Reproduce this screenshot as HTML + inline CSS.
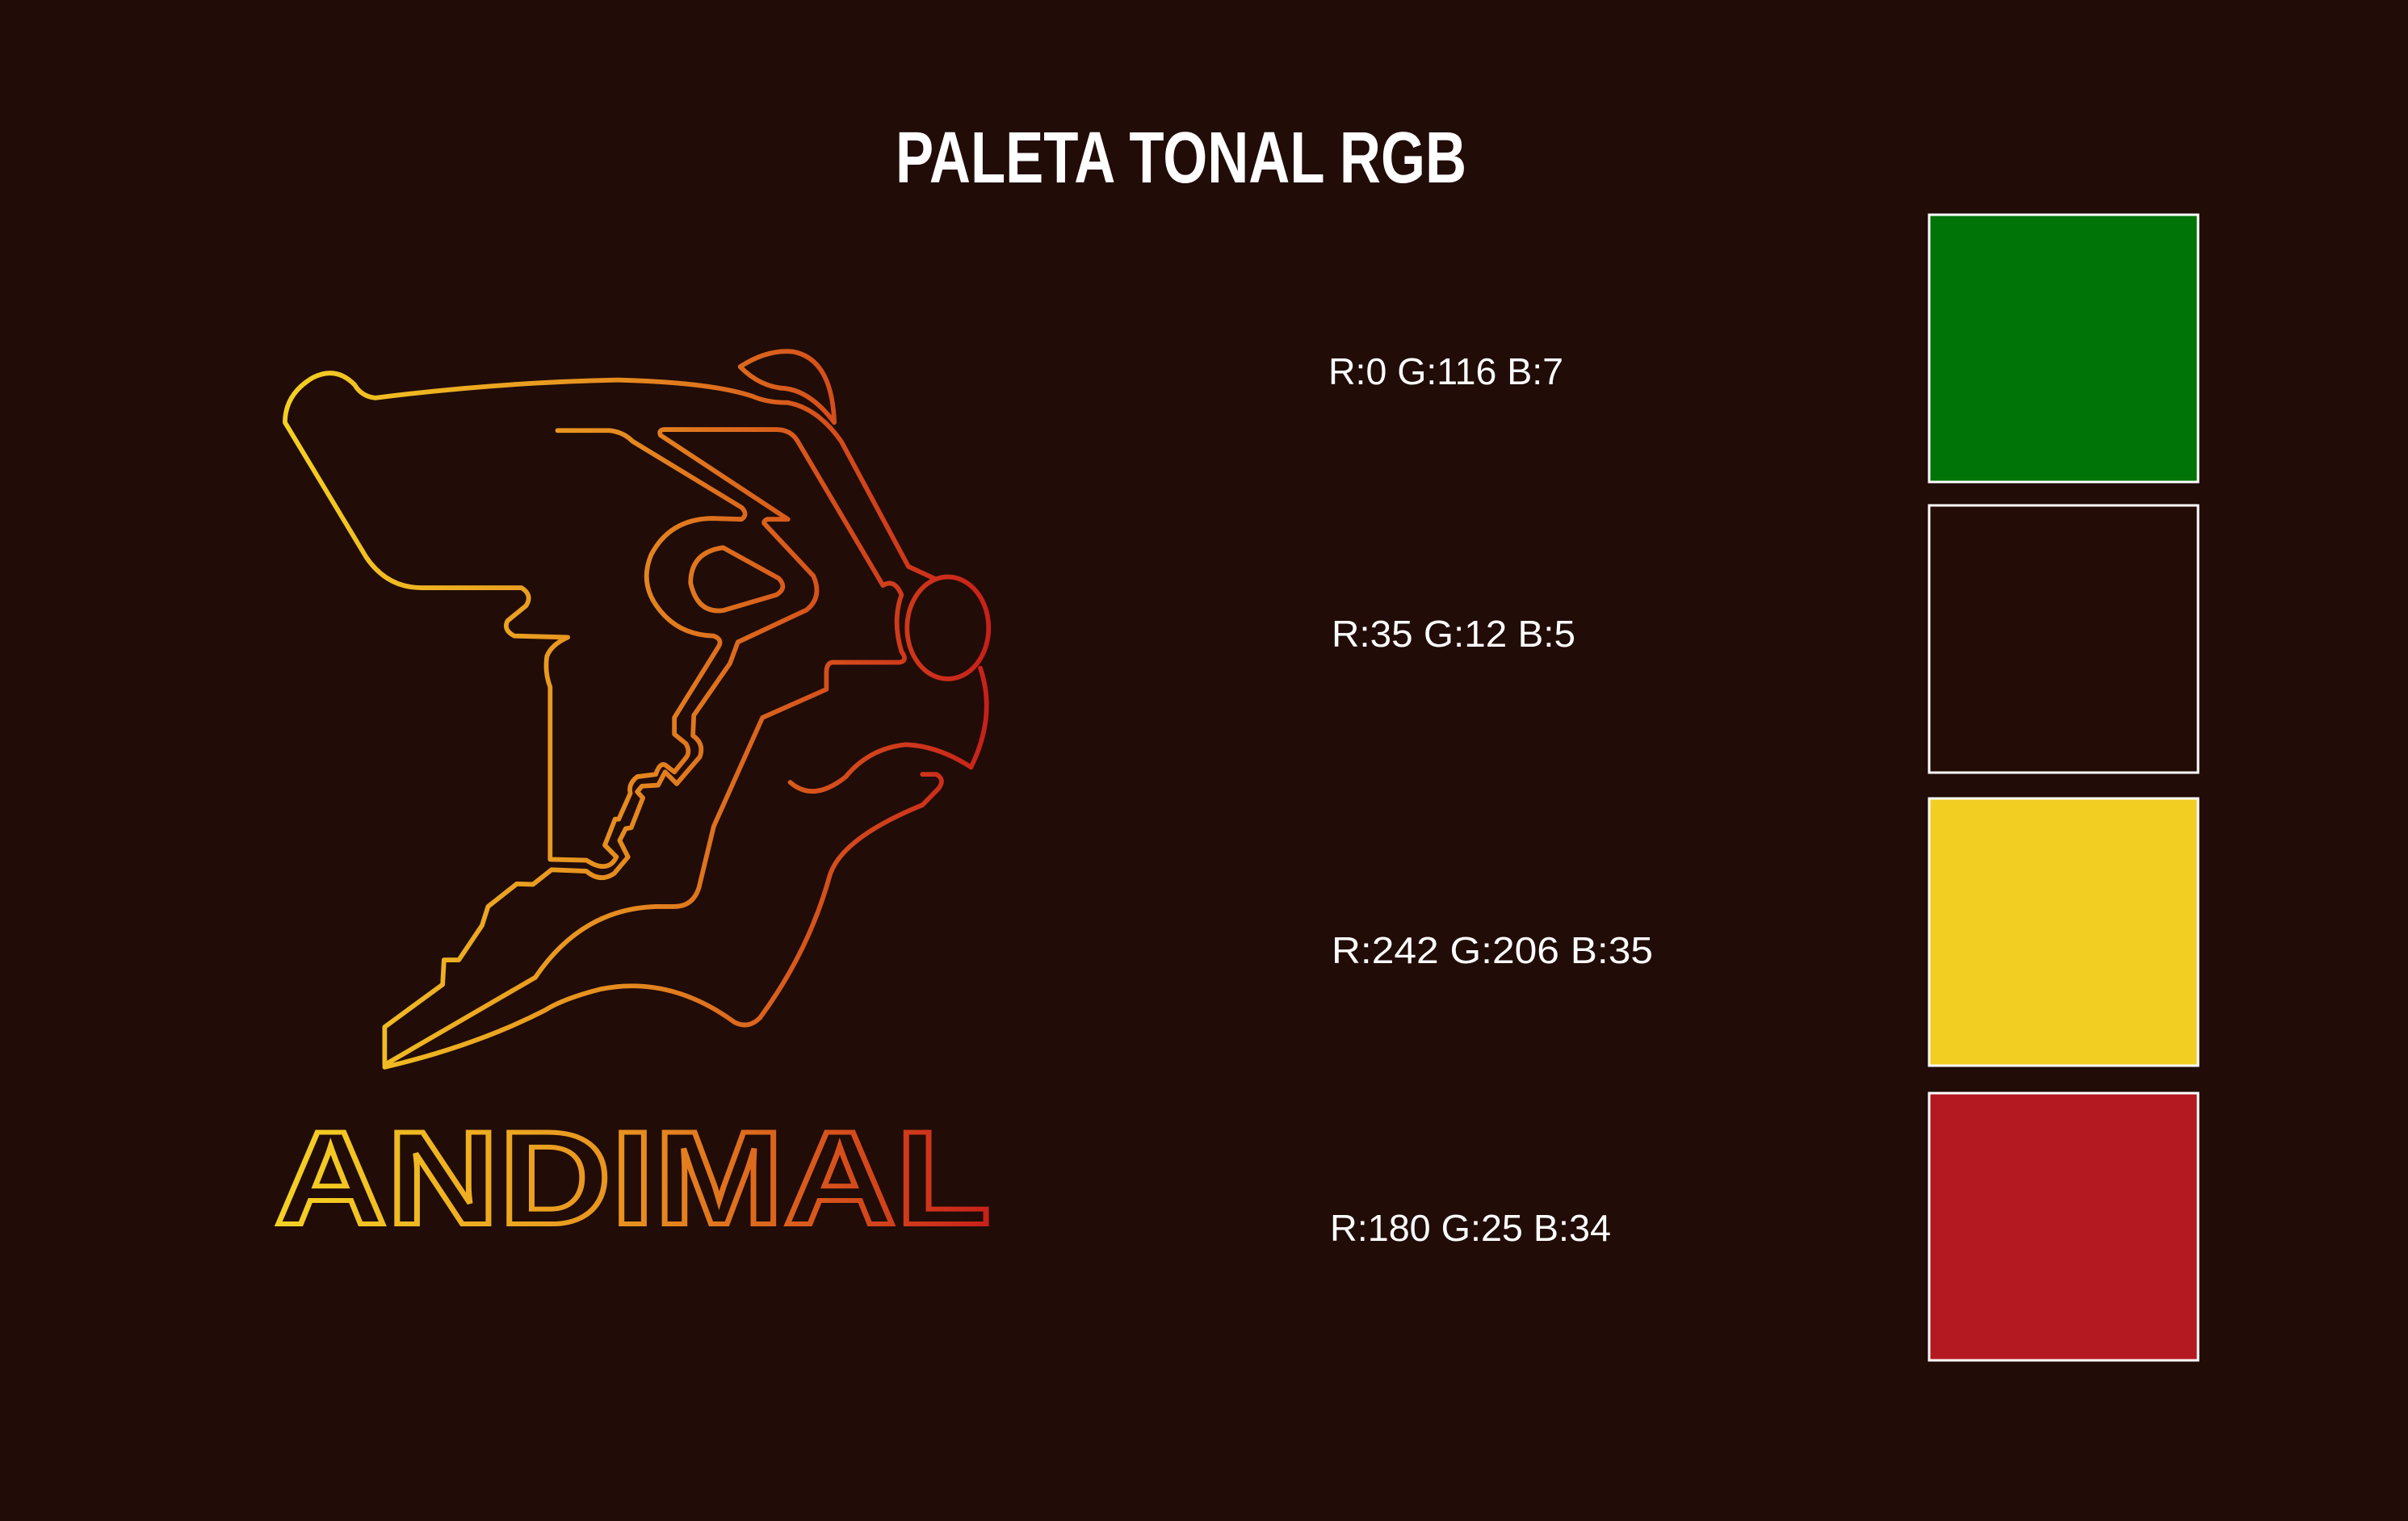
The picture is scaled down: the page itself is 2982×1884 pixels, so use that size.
<!DOCTYPE html>
<html><head><meta charset="utf-8"><style>
html,body{margin:0;padding:0;background:#210c07;}
svg{display:block}
</style></head><body>
<svg width="2982" height="1884" viewBox="0 0 2982 1884" xmlns="http://www.w3.org/2000/svg">
<defs>
<linearGradient id="g" gradientUnits="userSpaceOnUse" x1="0" y1="0" x2="1560" y2="0">
<stop offset="0" stop-color="#f5d423"/><stop offset="0.5" stop-color="#e58a1f"/><stop offset="1" stop-color="#c8201a"/></linearGradient>
<linearGradient id="t" gradientUnits="userSpaceOnUse" x1="330" y1="0" x2="1230" y2="0">
<stop offset="0" stop-color="#f5d423"/><stop offset="0.5" stop-color="#e8901f"/><stop offset="1" stop-color="#c8201a"/></linearGradient>
</defs>
<rect width="2982" height="1884" fill="#210c07"/>
<text x="1109" y="226" font-family="Liberation Sans, sans-serif" font-weight="bold" font-size="90" fill="#fff" textLength="707" lengthAdjust="spacingAndGlyphs">PALETA TONAL RGB</text>
<g transform="translate(330,418) scale(0.574,0.585)" fill="none" stroke="url(#g)" stroke-width="10" stroke-linejoin="round" stroke-linecap="round">
<path d="M612,1105 L690,1107 L705,1115 Q740,1130 755,1100 L730,1075 L752,1020 L760,1020 L785,965 Q780,945 800,930 L840,925 Q848,900 860,905 L880,920 L905,890 Q915,878 905,860 L880,840 L880,805 L975,655 Q985,640 965,632 Q900,630 860,590 Q800,530 830,460 Q870,385 960,383 L1025,385 Q1040,375 1025,360 L790,220 Q770,200 740,197 L628,197 M612,1105 L612,740 Q600,710 605,675 Q615,650 650,635 L535,632 Q510,620 520,600 L560,568 Q575,545 550,530 L335,530 Q260,530 215,465 L40,180 Q40,120 100,85 Q150,60 190,100 Q205,125 235,128 Q500,95 760,90 Q960,95 1050,125 Q1080,138 1125,138 Q1190,150 1240,220 L1385,485 L1440,510"/>
<path d="M255,1545 Q450,1500 600,1425 Q640,1400 720,1380 Q870,1350 1010,1450 Q1040,1465 1065,1440 Q1170,1300 1215,1140 Q1240,1060 1415,990 L1450,955 Q1465,935 1445,925 L1415,925"/>
<path d="M255,1540 L580,1355 Q680,1210 840,1205 L880,1205 Q920,1205 933,1165 L965,1035 L1070,805 L1208,745 L1208,710 Q1208,690 1220,688 L1365,688 Q1385,685 1370,665 Q1350,600 1370,545 Q1355,510 1330,525 L1145,218 Q1130,195 1100,195 L860,195 Q845,195 850,207 L1125,385 L1080,385 Q1070,390 1075,395 L1180,505 Q1200,550 1165,577 L1017,645 L1000,690 L922,800 L920,843 Q945,860 935,888 L885,945 L860,920 L845,948 L810,950 L800,962 L812,975 L787,1038 L775,1040 L762,1065 L780,1100 L750,1135 Q720,1155 690,1130 L615,1127 L575,1158 L540,1157 L478,1205 L465,1245 L415,1318 L383,1318 L380,1370 L255,1460 Z"/>
<path d="M985,445 L1105,510 Q1125,530 1100,545 L985,578 Q930,585 915,520 Q915,455 985,445 Z"/>
<path d="M1022,62 Q1080,25 1135,30 Q1220,45 1225,180 Q1175,115 1120,108 Q1065,105 1022,62 Z"/>
<ellipse cx="1470" cy="615" rx="88" ry="108"/>
<path d="M1540,700 Q1575,800 1520,910"/>
<path d="M1130,942 Q1180,985 1250,930 Q1300,870 1380,862 Q1450,865 1520,910"/>
</g>
<text x="340" y="1516" font-family="Liberation Sans, sans-serif" font-weight="bold" font-size="165" fill="none" stroke="url(#t)" stroke-width="6" textLength="887" lengthAdjust="spacingAndGlyphs">ANDIMAL</text>
<g font-family="Liberation Sans, sans-serif" font-size="46" fill="#fff" xml:space="preserve">
<text x="1645" y="476" textLength="291" lengthAdjust="spacingAndGlyphs">R:0  G:116  B:7</text>
<text x="1649" y="801" textLength="302" lengthAdjust="spacingAndGlyphs">R:35  G:12  B:5</text>
<text x="1649" y="1193" textLength="398" lengthAdjust="spacingAndGlyphs">R:242  G:206  B:35</text>
<text x="1647" y="1537" textLength="348" lengthAdjust="spacingAndGlyphs">R:180 G:25  B:34</text>
</g>
<g stroke="#fff" stroke-width="3">
<rect x="2389" y="266" width="333" height="331" fill="#007407"/>
<rect x="2389" y="626" width="333" height="331" fill="#230c05"/>
<rect x="2389" y="989" width="333" height="331" fill="#f2ce23"/>
<rect x="2389" y="1354" width="333" height="331" fill="#b41922"/>
</g>
</svg>
</body></html>
